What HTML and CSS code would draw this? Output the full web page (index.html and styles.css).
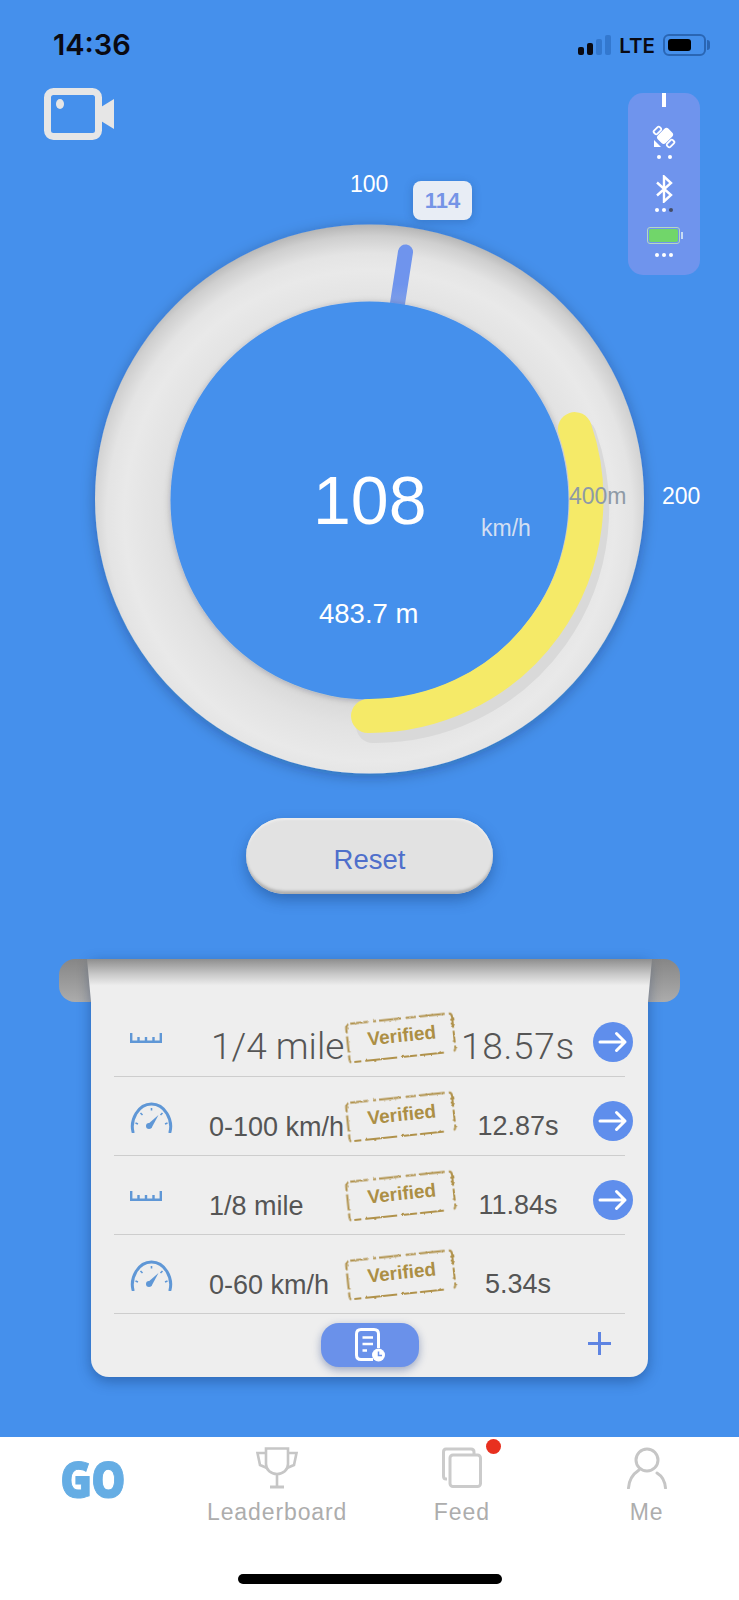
FILE: index.html
```html
<!DOCTYPE html>
<html lang="en">
<head>
    <meta charset="UTF-8">
    <meta name="viewport" content="width=device-width, initial-scale=1.0">
    <title>GO</title>
    <link rel="stylesheet" href="styles.css">
</head>
<body>
    <svg class="sprites" width="0" height="0" aria-hidden="true">
        <defs>
            <filter id="rough" x="-5%" y="-10%" width="110%" height="120%">
                <feTurbulence type="fractalNoise" baseFrequency="0.35" numOctaves="2" seed="4"></feTurbulence>
                <feDisplacementMap in="SourceGraphic" scale="2.6"></feDisplacementMap>
            </filter>
            <symbol id="ruler" viewBox="0 0 32 10">
                <path d="M1.200 0V8.800H30.800V0M8.500 4V9M16 4V9M23.500 4V9" fill="none" stroke="currentColor" stroke-width="2.400"></path>
            </symbol>
            <symbol id="dial" viewBox="0 0 43 31">
                <path d="M3 30C0 18 8 2 21.500 2S43 18 40 30" fill="none" stroke="currentColor" stroke-width="3" stroke-linecap="round"></path>
                <path d="M5.500 21L8 22M10.500 11L12.500 13M21.500 6V8.500M32.500 11L30.500 13M37.500 21L35 22" fill="none" stroke="currentColor" stroke-width="1.600"></path>
                <path d="M17.500 22.500L28.500 13L21.500 26Z" fill="currentColor"></path>
                <circle cx="19" cy="24" r="3" fill="currentColor"></circle>
            </symbol>
            <symbol id="arrow" viewBox="0 0 40 40">
                <circle cx="20" cy="20" r="20" fill="#5f8eec"></circle>
                <path d="M7 20H32M23.500 11.500L32 20L23.500 28.500" fill="none" stroke="#fff" stroke-width="3" stroke-linecap="round" stroke-linejoin="round"></path>
            </symbol>
            <symbol id="stampline" viewBox="0 0 110 42">
                <path d="M6 1.500H104Q108 1.500 108 5.500V36Q108 40 104 40H3.500Q1.500 40 1.500 37V6Q1.500 1.500 6 1.500Z" fill="none" stroke="#b0924b" stroke-width="2" stroke-dasharray="18 5 3 3 22 5 10 3 26 4 16 3 12 3 6 10 24 3 16 4 32 4 7 3 8 3 16 3 10"></path>
            </symbol>
        </defs>
    </svg>

    <div class="screen">
        <div class="status-bar">
            <span class="clock">14:36</span>
            <div class="status-right">
                <div class="signal">
                    <i class="on"></i><i class="on"></i><i></i><i></i>
                </div>
                <span class="lte">LTE</span>
                <div class="phone-battery"><b></b></div>
            </div>
        </div>

        <div class="gauge">
            <svg class="gauge-art" width="739" height="720" viewBox="0 0 739 720">
                <defs>
                    <radialGradient id="ringFill" gradientUnits="userSpaceOnUse" cx="369.500" cy="446" r="292">
                        <stop offset="0.63" stop-color="#d8d8d8"></stop>
                        <stop offset="0.72" stop-color="#e2e2e2"></stop>
                        <stop offset="0.84" stop-color="#e9e9e9"></stop>
                        <stop offset="0.90" stop-color="#e4e4e4"></stop>
                        <stop offset="0.96" stop-color="#cfcfcf"></stop>
                        <stop offset="1" stop-color="#b4b4b4"></stop>
                    </radialGradient>
                    <linearGradient id="needleFill" gradientUnits="userSpaceOnUse" x1="0" y1="182" x2="0" y2="236">
                        <stop offset="0.6" stop-color="#6f94ed"></stop>
                        <stop offset="1" stop-color="#7f9fe8"></stop>
                    </linearGradient>
                    <filter id="ringShadow" x="-10%" y="-10%" width="120%" height="120%">
                        <feDropShadow dx="0" dy="3" stdDeviation="7" flood-color="#123" flood-opacity="0.3"></feDropShadow>
                    </filter>
                    <filter id="holeShadow" x="-10%" y="-10%" width="120%" height="120%">
                        <feDropShadow dx="0" dy="1" stdDeviation="3" flood-color="#123" flood-opacity="0.25"></feDropShadow>
                    </filter>
                </defs>
                <circle cx="369.500" cy="429" r="274.500" fill="url(#ringFill)" filter="url(#ringShadow)"></circle>
                <path d="M405.500 182L396.500 240" stroke="url(#needleFill)" stroke-width="15" stroke-linecap="round"></path>
                <circle cx="369.500" cy="430.500" r="199" fill="#4590ec" filter="url(#holeShadow)"></circle>
                <path d="M579.500 366A217 217 0 0 1 373 656" fill="none" stroke="#d9d9d9" stroke-width="34" stroke-linecap="round"></path>
                <path d="M574.900 359.100A217 217 0 0 1 368 646" fill="none" stroke="#f5ea68" stroke-width="34" stroke-linecap="round"></path>
            </svg>

            <span class="mark mark-100">100</span>
            <span class="mark mark-200">200</span>
            <span class="peak">114</span>
            <span class="speed">108</span>
            <span class="unit">km/h</span>
            <span class="target">400m</span>
            <span class="distance">483.7 m</span>

            <svg class="camera" width="70" height="52" viewBox="0 0 70 52">
                <rect x="3.500" y="3.500" width="51" height="45" rx="6" fill="none" stroke="#e6e6e6" stroke-width="7"></rect>
                <ellipse cx="16" cy="16" rx="4" ry="5" fill="#e6e6e6"></ellipse>
                <path d="M57 19L70 11V41L57 33Z" fill="#e6e6e6"></path>
            </svg>

            <div class="device">
                <i class="device-tick"></i>
                <svg class="device-sat" width="24" height="24" viewBox="-12 -12 24 24">
                    <g transform="rotate(45)">
                        <rect x="-5.500" y="-9" width="11" height="15" rx="3" fill="#fff"></rect>
                        <rect x="-11.500" y="-4" width="4.500" height="8" rx="1.500" fill="none" stroke="#fff" stroke-width="1.800"></rect>
                        <rect x="7" y="-4" width="4.500" height="8" rx="1.500" fill="none" stroke="#fff" stroke-width="1.800"></rect>
                    </g>
                    <path d="M-10 3L-3 10L-10 10Z" fill="#fff"></path>
                </svg>
                <div class="dots dots-wide"><i></i><i></i></div>
                <svg class="device-bt" width="18" height="28" viewBox="0 0 18 28">
                    <path d="M2 7.500L16 20L9 26.500V1.500L16 8L2 20.500" fill="none" stroke="#fff" stroke-width="2.400"></path>
                </svg>
                <div class="dots"><i></i><i></i><i class="off"></i></div>
                <div class="device-battery"><b></b></div>
                <div class="dots"><i></i><i></i><i></i></div>
            </div>
        </div>

        <button class="reset">Reset</button>

        <div class="scroll">
            <div class="sheet">
                <div class="run">
                    <svg class="icon-ruler"><use href="#ruler"></use></svg>
                    <span class="run-name big">1/4 mile</span>
                    <div class="stamp"><svg><use href="#stampline"></use></svg><span>Verified</span></div>
                    <span class="run-time big">18.57s</span>
                    <svg class="go-arrow"><use href="#arrow"></use></svg>
                </div>
                <div class="run">
                    <svg class="icon-dial"><use href="#dial"></use></svg>
                    <span class="run-name">0-100 km/h</span>
                    <div class="stamp"><svg><use href="#stampline"></use></svg><span>Verified</span></div>
                    <span class="run-time">12.87s</span>
                    <svg class="go-arrow"><use href="#arrow"></use></svg>
                </div>
                <div class="run">
                    <svg class="icon-ruler"><use href="#ruler"></use></svg>
                    <span class="run-name">1/8 mile</span>
                    <div class="stamp"><svg><use href="#stampline"></use></svg><span>Verified</span></div>
                    <span class="run-time">11.84s</span>
                    <svg class="go-arrow"><use href="#arrow"></use></svg>
                </div>
                <div class="run">
                    <svg class="icon-dial"><use href="#dial"></use></svg>
                    <span class="run-name">0-60 km/h</span>
                    <div class="stamp"><svg><use href="#stampline"></use></svg><span>Verified</span></div>
                    <span class="run-time">5.34s</span>
                </div>
                <div class="sheet-foot">
                    <div class="history">
                        <svg width="30" height="34" viewBox="0 0 30 34">
                            <path d="M18 31.500H6Q1.500 31.500 1.500 27V6Q1.500 1.500 6 1.500H19Q23.500 1.500 23.500 6V20" fill="none" stroke="#fff" stroke-width="3"></path>
                            <path d="M7.500 9.500H18M7.500 16H18M7.500 22.500H12" fill="none" stroke="#fff" stroke-width="2.600"></path>
                            <circle cx="23.500" cy="27" r="6.500" fill="#fff"></circle>
                            <path d="M23.500 23.500V27.500H27" fill="none" stroke="#6a91ea" stroke-width="1.500"></path>
                        </svg>
                    </div>
                    <svg class="add" width="23" height="23" viewBox="0 0 23 23">
                        <path d="M11.500 0V23M0 11.500H23" stroke="currentColor" stroke-width="3"></path>
                    </svg>
                </div>
            </div>
        </div>

        <div class="tabbar">
            <div class="tabs">
                <div class="tab"><span class="go-logo">GO</span></div>
                <div class="tab">
                    <svg width="42" height="42" viewBox="0 0 42 42" fill="none" stroke="#c6c6c6" stroke-width="2.600">
                        <path d="M10 1.500H32V17C32 23 27 27 21 27S10 23 10 17Z"></path>
                        <path d="M10 6H1.500L4 18L11 21M32 6H40.500L38 18L31 21"></path>
                        <path d="M21 27V39"></path>
                        <path d="M14 40H28" stroke-width="3"></path>
                    </svg>
                    <span class="tab-label">Leaderboard</span>
                </div>
                <div class="tab">
                    <div class="feed-icon">
                        <svg width="40" height="41" viewBox="0 0 40 41" fill="none" stroke="#cbcbcb" stroke-width="3">
                            <path d="M5 32H4Q1.500 32 1.500 29V5Q1.500 2 4 2H29Q32 2 32 5V7"></path>
                            <rect x="8" y="8" width="30.500" height="31.500" rx="3"></rect>
                        </svg>
                        <i class="badge"></i>
                    </div>
                    <span class="tab-label">Feed</span>
                </div>
                <div class="tab">
                    <svg width="40" height="42" viewBox="0 0 40 42" fill="none" stroke="#c6c6c6" stroke-width="3">
                        <circle cx="20" cy="13" r="11"></circle>
                        <path d="M12 23C6 27 2 33 1.500 41M30 26C35 29 38 35 38.500 41" stroke-linecap="round"></path>
                    </svg>
                    <span class="tab-label">Me</span>
                </div>
            </div>
            <div class="home-bar"></div>
        </div>
    </div>
</body>
</html>
```

FILE: styles.css
```css
* {
    margin: 0;
    padding: 0;
    box-sizing: border-box;
}

body {
    font-family: 'Liberation Sans', Arial, sans-serif;
    background: #4590ec;
}

.sprites {
    position: absolute;
}

.screen {
    width: 739px;
    height: 1600px;
    display: flex;
    flex-direction: column;
    overflow: hidden;
}

/* status bar */

.status-bar {
    height: 70px;
    padding: 28px 33px 0 53px;
    display: flex;
    justify-content: space-between;
    align-items: flex-start;
}

.clock {
    font-family: Inter, sans-serif;
    font-size: 29px;
    font-weight: 600;
    line-height: 34px;
    color: #0a0a12;
}

.status-right {
    display: flex;
    align-items: center;
    height: 34px;
}

.signal {
    display: flex;
    align-items: flex-end;
    gap: 3px;
    height: 20px;
    margin-right: 8px;
}

.signal i {
    width: 6px;
    background: #3378cf;
    border-radius: 2px;
}

.signal i.on {
    background: #0a0a12;
}

.signal i:nth-child(1) { height: 8px; }
.signal i:nth-child(2) { height: 12px; }
.signal i:nth-child(3) { height: 16px; }
.signal i:nth-child(4) { height: 20px; }

.lte {
    font-family: Inter, sans-serif;
    font-size: 20.500px;
    font-weight: 600;
    color: #0a0a12;
    margin-right: 8px;
}

.phone-battery {
    position: relative;
    width: 43px;
    height: 22px;
    border: 2px solid #2a66b4;
    border-radius: 6px;
    padding: 3px;
}

.phone-battery b {
    display: block;
    width: 23px;
    height: 100%;
    background: #000;
    border-radius: 3px;
}

.phone-battery::after {
    content: '';
    position: absolute;
    right: -6px;
    top: 4px;
    width: 3px;
    height: 10px;
    background: #2a66b4;
    border-radius: 0 3px 3px 0;
}

/* gauge */

.gauge {
    position: relative;
    height: 720px;
    flex-shrink: 0;
}

.gauge-art {
    position: absolute;
    left: 0;
    top: 0;
}

.mark,
.unit,
.target,
.speed,
.distance,
.peak {
    position: absolute;
    line-height: 1;
    white-space: nowrap;
}

.mark {
    font-size: 23px;
    color: #fff;
}

.mark-100 {
    left: 350px;
    top: 103px;
}

.mark-200 {
    left: 662px;
    top: 415px;
}

.peak {
    left: 413px;
    top: 111px;
    width: 59px;
    height: 39px;
    border-radius: 8px;
    background: #e8edf5;
    box-shadow: 0 2px 10px rgba(20, 50, 100, 0.25);
    color: #7594e6;
    font-size: 22px;
    font-weight: 700;
    line-height: 39px;
    text-align: center;
}

.speed {
    left: 313px;
    top: 396px;
    font-size: 68px;
    color: #fff;
}

.unit {
    left: 481px;
    top: 447px;
    font-size: 23px;
    color: #d3dff2;
}

.target {
    left: 569px;
    top: 415px;
    font-size: 23px;
    color: #8e9aa6;
}

.distance {
    left: 319px;
    top: 530px;
    font-size: 27.500px;
    color: #fff;
}

.camera {
    position: absolute;
    left: 44px;
    top: 18px;
}

.device {
    position: absolute;
    left: 628px;
    top: 23px;
    width: 72px;
    height: 182px;
    border-radius: 15px;
    background: #6f94ed;
    display: flex;
    flex-direction: column;
    align-items: center;
}

.device-tick {
    width: 4px;
    height: 14px;
    background: #fff;
}

.device-sat {
    margin-top: 18px;
}

.device-bt {
    margin-top: 16px;
}

.dots {
    display: flex;
    justify-content: center;
    gap: 3px;
    margin-top: 5px;
}

.dots-wide {
    gap: 7px;
    margin-top: 6px;
}

.dots i {
    width: 4px;
    height: 4px;
    border-radius: 50%;
    background: #fff;
}

.dots i.off {
    background: #444c66;
}

.device-battery {
    position: relative;
    width: 33px;
    height: 17px;
    margin-top: 15px;
    margin-right: 2px;
    border: 1px solid #b5d8c0;
    border-radius: 3px;
    padding: 1px;
}

.device-battery b {
    display: block;
    height: 100%;
    background: #71d66a;
    border-radius: 2px;
}

.device-battery::after {
    content: '';
    position: absolute;
    right: -4px;
    top: 4px;
    width: 2px;
    height: 7px;
    background: #c8dcf5;
}

.device-battery + .dots {
    margin-top: 9px;
}

/* reset */

.reset {
    width: 247px;
    height: 76px;
    margin: 28px auto 0;
    padding-top: 7px;
    flex-shrink: 0;
    border: 0;
    border-radius: 38px;
    background: #e2e2e2;
    box-shadow: inset 0 -4px 3px -1px #aeaeae, inset 0 2px 2px #ececec, 0 6px 14px rgba(10, 40, 90, 0.35);
    font-family: inherit;
    font-size: 27.500px;
    color: #4f6fcb;
}

/* results sheet */

.scroll {
    position: relative;
    margin: 65px 59px 0;
    padding: 0 32px;
}

.scroll::before {
    content: '';
    position: absolute;
    left: 0;
    right: 0;
    top: 0;
    height: 43px;
    border-radius: 16px;
    background: linear-gradient(#868686, #acacac);
}

.sheet {
    position: relative;
    height: 418px;
    padding: 39px 23px 0;
    background: #eeeeee;
    border-radius: 0 0 18px 18px;
    box-shadow: 0 4px 14px rgba(10, 40, 90, 0.4);
}

.sheet::before {
    content: '';
    position: absolute;
    left: -4px;
    right: -4px;
    top: 0;
    height: 43px;
    background: linear-gradient(#8e8e8e, #c8c8c8 35%, #eeeeee 62%);
    clip-path: polygon(0 0, 100% 0, calc(100% - 4px) 100%, 4px 100%);
}

.run {
    position: relative;
    height: 79px;
    border-bottom: 1px solid #cdcdcd;
    display: grid;
    grid-template-columns: 95px 135px 112px 124px 13px 40px;
    align-items: start;
    color: #555;
}

.icon-ruler {
    width: 32px;
    height: 10px;
    margin: 35px 0 0 16px;
    color: #5f97d6;
}

.icon-dial {
    width: 43px;
    height: 31px;
    margin: 25px 0 0 16px;
    color: #5f97d6;
}

.run-name {
    font-size: 27px;
    line-height: 32px;
    margin-top: 34px;
    white-space: nowrap;
}

.run-name.big {
    font-family: Roboto, sans-serif;
    font-weight: 300;
    font-size: 37px;
    line-height: 44px;
    margin-top: 27px;
    margin-left: 2px;
}

.run-time {
    font-size: 27px;
    line-height: 32px;
    margin-top: 33px;
    text-align: center;
    white-space: nowrap;
}

.run-time.big {
    font-family: Roboto, sans-serif;
    font-weight: 300;
    font-size: 37px;
    letter-spacing: 0.7px;
    line-height: 44px;
    margin-top: 27px;
}

.stamp {
    position: relative;
    width: 110px;
    height: 42px;
    margin: 19px 0 0 2px;
    padding-left: 2px;
    transform: rotate(-6deg);
    color: #ac8f45;
    font-size: 19px;
    font-weight: 700;
    line-height: 38px;
    text-align: center;
}

.stamp svg {
    position: absolute;
    left: 0;
    top: 0;
    width: 110px;
    height: 42px;
    filter: url(#rough);
}

.stamp span {
    position: relative;
}

.go-arrow {
    grid-column: 6;
    width: 40px;
    height: 40px;
    margin-top: 24px;
}

.sheet-foot {
    position: relative;
    padding-top: 9px;
    display: flex;
    justify-content: center;
}

.history {
    width: 98px;
    height: 44px;
    border-radius: 18px;
    background: #6a91ea;
    box-shadow: 0 3px 8px rgba(30, 60, 130, 0.4);
    display: flex;
    align-items: center;
    justify-content: center;
}

.add {
    position: absolute;
    right: 14px;
    top: 18px;
    color: #5e84e2;
}

/* tab bar */

.tabbar {
    margin-top: auto;
    height: 163px;
    background: #fff;
    display: flex;
    flex-direction: column;
}

.tabs {
    height: 137px;
    padding-top: 10px;
    display: grid;
    grid-template-columns: repeat(4, 1fr);
}

.tab {
    display: flex;
    flex-direction: column;
    align-items: center;
}

.tab-label {
    margin-top: 9px;
    font-size: 23px;
    line-height: 28px;
    letter-spacing: 0.9px;
    color: #adadad;
}

.go-logo {
    margin-top: 6px;
    font-family: 'Open Sans', sans-serif;
    font-size: 50px;
    font-weight: 800;
    line-height: 52px;
    letter-spacing: -1px;
    color: #65ade4;
    -webkit-text-stroke: 1px #65ade4;
    transform: scaleX(0.86);
}

.feed-icon {
    position: relative;
    height: 42px;
}

.badge {
    position: absolute;
    left: 44px;
    top: -8px;
    width: 15px;
    height: 15px;
    border-radius: 50%;
    background: #e8301f;
}

.home-bar {
    width: 264px;
    height: 10px;
    margin: 0 auto;
    border-radius: 5px;
    background: #000;
}
```
